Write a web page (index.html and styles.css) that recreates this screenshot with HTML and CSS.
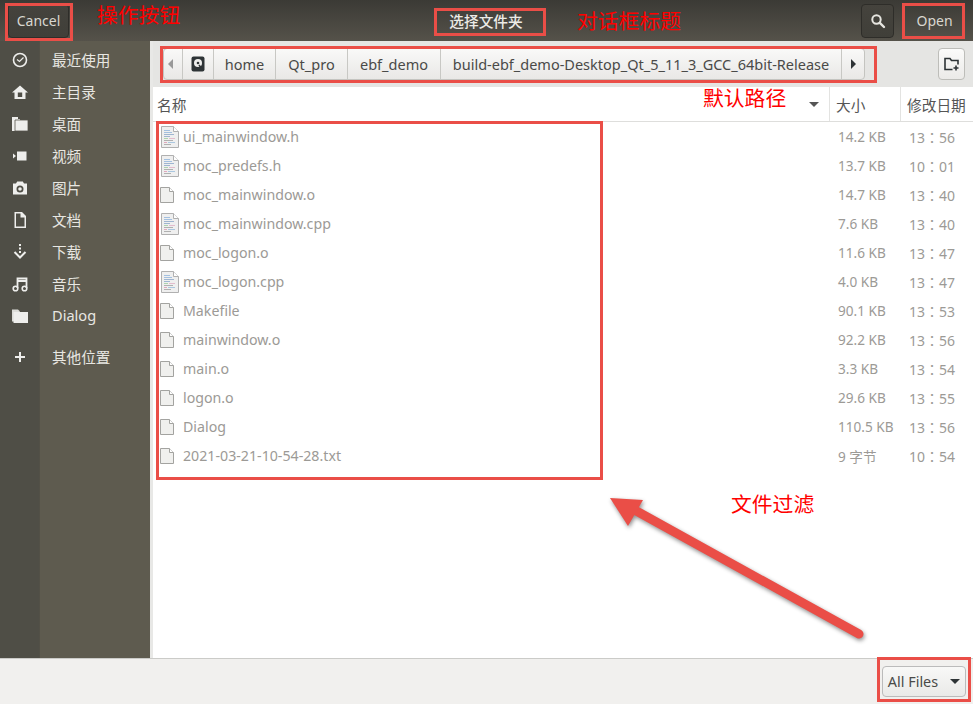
FILE: index.html
```html
<!DOCTYPE html>
<html lang="zh">
<head>
<meta charset="utf-8">
<title>选择文件夹</title>
<link rel="stylesheet" href="styles.css">
</head>
<body>
<svg class="defs" width="0" height="0" aria-hidden="true">
  <symbol id="file-plain" viewBox="0 0 14 16">
    <path d="M.5.5h9l4 4v11h-13z" fill="#f0f0ee" stroke="#a3a3a0"/>
    <path d="M9.500.5v4h4" fill="#fff" stroke="#a3a3a0"/>
  </symbol>
  <symbol id="file-text" viewBox="0 0 18 22">
    <path d="M.5.5h12l5 5v16h-17z" fill="#efefef" stroke="#b0b0b0"/>
    <path d="M12.500.5v5h5" fill="#fff" stroke="#b0b0b0"/>
    <g stroke-width=".8">
      <path d="M3 4.500h6M3 6.500h8" stroke="#8fb4dc"/>
      <path d="M3 8.500h10M3 10.500h6" stroke="#8aa6c8"/>
      <path d="M3 12.500h4" stroke="#9ccc9c"/><path d="M8 12.500h6" stroke="#dfaec4"/>
      <path d="M3 14.500h9" stroke="#a0a0a0"/>
      <path d="M3 16.500h3" stroke="#dc94ae"/><path d="M7 16.500h7" stroke="#98bcdc"/>
      <path d="M3 18.500h7" stroke="#a0a0a0"/>
    </g>
  </symbol>
</svg>

<div class="app">
  <header class="titlebar">
    <button class="hbtn cancel">Cancel</button>
    <div class="title">选择文件夹</div>
    <button class="hbtn search" aria-label="search">
      <svg width="16" height="16" viewBox="0 0 16 16"><circle cx="6.500" cy="6.500" r="4.200" fill="none" stroke="#e6e5e0" stroke-width="2"/><path d="M9.800 9.800l4.200 4.200" stroke="#e6e5e0" stroke-width="2.400" stroke-linecap="round"/></svg>
    </button>
    <button class="hbtn open">Open</button>
  </header>

  <div class="main">
    <nav class="sidebar">
      <div class="side-item">
        <span class="side-icon"><svg width="16" height="16" viewBox="0 0 16 16"><circle cx="8" cy="8" r="6.500" fill="none" stroke="#eeeeec" stroke-width="1.600"/><path d="M5 7.500l2.500 2 4-4" fill="none" stroke="#eeeeec" stroke-width="1.200"/></svg></span>
        <span class="side-label">最近使用</span>
      </div>
      <div class="side-item">
        <span class="side-icon"><svg width="16" height="16" viewBox="0 0 16 16"><path fill-rule="evenodd" d="M8 1.500L0 8.500h2.500V15h11V8.500H16zM5.800 8.500h4.400v4.500H5.800z" fill="#eeeeec"/></svg></span>
        <span class="side-label">主目录</span>
      </div>
      <div class="side-item">
        <span class="side-icon"><svg width="16" height="16" viewBox="0 0 16 16"><path d="M0 1h6v2h2v12H0z" fill="#eeeeec"/><path d="M3 4h13v11H3z" fill="#eeeeec" stroke="#56544b" stroke-width=".8"/></svg></span>
        <span class="side-label">桌面</span>
      </div>
      <div class="side-item">
        <span class="side-icon"><svg width="16" height="16" viewBox="0 0 16 16"><path d="M5 3.500h9.500v9H5z" fill="#eeeeec"/><path d="M1 5.500l3 2.500-3 2.500z" fill="#eeeeec"/></svg></span>
        <span class="side-label">视频</span>
      </div>
      <div class="side-item">
        <span class="side-icon"><svg width="16" height="16" viewBox="0 0 16 16"><path fill-rule="evenodd" d="M1 3.500h3l1.200-2h5.600l1.200 2h3v11H1zM8 5.500a3.500 3.500 0 1 0 0 7 3.500 3.500 0 0 0 0-7zM8 7.200a1.800 1.800 0 1 1 0 3.600 1.800 1.800 0 0 1 0-3.600z" fill="#eeeeec"/></svg></span>
        <span class="side-label">图片</span>
      </div>
      <div class="side-item">
        <span class="side-icon"><svg width="16" height="16" viewBox="0 0 16 16"><path fill-rule="evenodd" d="M2.500 0h7.500l4 4v12H2.500zM4 1.500v13h8.500V5.500H8.500v-4z" fill="#eeeeec"/></svg></span>
        <span class="side-label">文档</span>
      </div>
      <div class="side-item">
        <span class="side-icon"><svg width="16" height="16" viewBox="0 0 16 16"><path d="M8 0v2M8 3.500v2M8 7v2" stroke="#eeeeec" stroke-width="2"/><path d="M2.500 8L8 13.500 13.500 8" fill="none" stroke="#eeeeec" stroke-width="2"/></svg></span>
        <span class="side-label">下载</span>
      </div>
      <div class="side-item">
        <span class="side-icon"><svg width="16" height="16" viewBox="0 0 16 16"><path d="M5.500 12V2.500h9V12M5.500 5h9" fill="none" stroke="#eeeeec" stroke-width="1.800"/><circle cx="3.500" cy="12.500" r="2.300" fill="none" stroke="#eeeeec" stroke-width="1.600"/><circle cx="12.500" cy="12.500" r="2.300" fill="none" stroke="#eeeeec" stroke-width="1.600"/></svg></span>
        <span class="side-label">音乐</span>
      </div>
      <div class="side-item">
        <span class="side-icon"><svg width="16" height="16" viewBox="0 0 16 16"><path d="M0 1.500h6l2 2v10H0z" fill="#dcdcd8"/><path d="M1.500 4h14.500v11H1.500z" fill="#eeeeec"/></svg></span>
        <span class="side-label">Dialog</span>
      </div>
      <div class="side-item other">
        <span class="side-icon"><svg width="12" height="12" viewBox="0 0 12 12"><path d="M6 1v10M1 6h10" stroke="#eeeeec" stroke-width="2"/></svg></span>
        <span class="side-label">其他位置</span>
      </div>
    </nav>

    <section class="content">
      <div class="pathbar">
        <div class="crumbs">
          <button class="crumb nav-prev"><span class="tri-left"></span></button>
          <button class="crumb disk">
            <svg width="14" height="16" viewBox="0 0 14 16"><rect x=".5" y=".5" width="13" height="15" rx="2" fill="#2e3436"/><circle cx="7" cy="7" r="4" fill="#eeeeec"/><circle cx="7" cy="7" r="1.300" fill="#2e3436"/><path d="M8 9l3 4" stroke="#2e3436" stroke-width="1.500"/></svg>
          </button>
          <button class="crumb c-home">home</button>
          <button class="crumb c-qt">Qt_pro</button>
          <button class="crumb c-ebf">ebf_demo</button>
          <button class="crumb c-build">build-ebf_demo-Desktop_Qt_5_11_3_GCC_64bit-Release</button>
          <button class="crumb nav-next"><span class="tri-right"></span></button>
        </div>
        <button class="newfolder" aria-label="new folder">
          <svg width="16" height="16" viewBox="0 0 16 16"><path d="M8.500 13.500H1V2.500h5l1.500 2H14v4" fill="none" stroke="#2e3436" stroke-width="1.600"/><path d="M12 9.500v5M9.500 12h5" stroke="#2e3436" stroke-width="1.600"/></svg>
        </button>
      </div>

      <div class="table-head">
        <div class="col-name">名称<span class="sort"></span></div>
        <div class="col-size">大小</div>
        <div class="col-date">修改日期</div>
      </div>

      <div class="rows">
        <div class="row"><svg class="ico-text"><use href="#file-text"/></svg><span class="name">ui_mainwindow.h</span><span class="size">14.2 KB</span><span class="date">13：56</span></div>
        <div class="row"><svg class="ico-text"><use href="#file-text"/></svg><span class="name">moc_predefs.h</span><span class="size">13.7 KB</span><span class="date">10：01</span></div>
        <div class="row"><svg class="ico-plain"><use href="#file-plain"/></svg><span class="name">moc_mainwindow.o</span><span class="size">14.7 KB</span><span class="date">13：40</span></div>
        <div class="row"><svg class="ico-text"><use href="#file-text"/></svg><span class="name">moc_mainwindow.cpp</span><span class="size">7.6 KB</span><span class="date">13：40</span></div>
        <div class="row"><svg class="ico-plain"><use href="#file-plain"/></svg><span class="name">moc_logon.o</span><span class="size">11.6 KB</span><span class="date">13：47</span></div>
        <div class="row"><svg class="ico-text"><use href="#file-text"/></svg><span class="name">moc_logon.cpp</span><span class="size">4.0 KB</span><span class="date">13：47</span></div>
        <div class="row"><svg class="ico-plain"><use href="#file-plain"/></svg><span class="name">Makefile</span><span class="size">90.1 KB</span><span class="date">13：53</span></div>
        <div class="row"><svg class="ico-plain"><use href="#file-plain"/></svg><span class="name">mainwindow.o</span><span class="size">92.2 KB</span><span class="date">13：56</span></div>
        <div class="row"><svg class="ico-plain"><use href="#file-plain"/></svg><span class="name">main.o</span><span class="size">3.3 KB</span><span class="date">13：54</span></div>
        <div class="row"><svg class="ico-plain"><use href="#file-plain"/></svg><span class="name">logon.o</span><span class="size">29.6 KB</span><span class="date">13：55</span></div>
        <div class="row"><svg class="ico-plain"><use href="#file-plain"/></svg><span class="name">Dialog</span><span class="size">110.5 KB</span><span class="date">13：56</span></div>
        <div class="row"><svg class="ico-plain"><use href="#file-plain"/></svg><span class="name">2021-03-21-10-54-28.txt</span><span class="size">9 字节</span><span class="date">10：54</span></div>
      </div>
    </section>
  </div>

  <footer class="footer">
    <button class="filter">All Files<span class="sort dark"></span></button>
  </footer>
</div>

<!-- screenshot annotations drawn over the dialog -->
<div class="mark m-cancel"></div>
<div class="mark m-title"></div>
<div class="mark m-open"></div>
<div class="mark m-path"></div>
<div class="mark m-list"></div>
<div class="mark m-filter"></div>
<div class="note n-action">操作按钮</div>
<div class="note n-title">对话框标题</div>
<div class="note n-path">默认路径</div>
<div class="note n-filter">文件过滤</div>
<svg class="arrow" width="973" height="704" viewBox="0 0 973 704" aria-hidden="true">
  <g class="arrow-art">
    <path d="M859 634L631 508" stroke="#ea4e47" stroke-width="9" stroke-linecap="round"/>
    <path d="M610 498L643 500 628 526z" fill="#ea4e47"/>
  </g>
</svg>
</body>
</html>
```

FILE: styles.css
```css
* { box-sizing: border-box; }
html, body { margin: 0; padding: 0; }
body {
  width: 973px;
  height: 704px;
  overflow: hidden;
  position: relative;
  font-family: "Noto Sans", "Noto Sans CJK SC", sans-serif;
  font-size: 14px;
  background: #fff;
}
button { font: inherit; padding: 0; }
.defs { position: absolute; }
.app { display: flex; flex-direction: column; height: 704px; }

.titlebar {
  height: 41px;
  flex: none;
  display: flex;
  align-items: center;
  padding: 0 8px;
  background: linear-gradient(#3b3a35, #55524a);
  position: relative;
}
.title {
  flex: 1;
  text-align: center;
  color: #ecebe6;
  font-weight: 500;
  font-size: 14.700px;
  padding-left: 42px;
}
.hbtn {
  height: 34px;
  color: #d9d7d0;
  background: linear-gradient(#45433d, #403f39);
  border: 1px solid #2e2d29;
  border-radius: 4px;
}
.cancel { width: 61px; }
.search { width: 33px; display: flex; align-items: center; justify-content: center; }
.open {
  width: 61px;
  margin-left: 10px;
  background: none;
  border-color: transparent;
}

.main { flex: 1; display: flex; min-height: 0; }
.sidebar {
  width: 150px;
  flex: none;
  padding-top: 2px;
  background: linear-gradient(90deg, #4f4e46 0, #4f4e46 39px, #46453e 39px, #5e5b4f 40px);
  color: #e8e7e2;
}
.side-item { height: 32px; display: flex; align-items: center; }
.side-item.other { margin-top: 9px; }
.side-icon { width: 39px; padding-top: 2px; display: flex; justify-content: center; }
.side-label { margin-left: 13px; font-size: 14.600px; }

.content { flex: 1; display: flex; flex-direction: column; border-left: 3px solid #e8e8e6; min-width: 0; }
.pathbar {
  height: 46px;
  flex: none;
  background: #e5e5e3;
  display: flex;
  align-items: center;
  padding: 0 8px 0 10px;
  justify-content: space-between;
}
.crumbs {
  display: flex;
  height: 32px;
  width: 702px;
  border: 1px solid #c4c4c0;
  border-radius: 4px;
  overflow: hidden;
  background: linear-gradient(#f9f9f8, #e9e8e6);
  font-size: 14.500px;
}
.crumb {
  flex: none;
  height: 100%;
  border: 0;
  border-right: 1px solid #c8c8c4;
  background: none;
  color: #4a4a48;
  display: flex;
  align-items: center;
  justify-content: center;
  white-space: nowrap;
}
.nav-prev { width: 19px; padding-right: 5px; }
.disk { width: 31px; }
.c-home { width: 62px; }
.c-qt { width: 72px; }
.c-ebf { width: 93px; }
.c-build { width: 401px; }
.nav-next { width: 22px; border-right: 0; border-left: 0; }
.tri-left { border: 5px solid transparent; border-left: 0; border-right: 5px solid #999; }
.tri-right { border: 5px solid transparent; border-right: 0; border-left: 5px solid #2e3436; }
.newfolder {
  width: 27px;
  height: 32px;
  border: 1px solid #bdbdb9;
  border-radius: 4px;
  background: linear-gradient(#fbfbfa, #ebeae8);
  display: flex;
  align-items: center;
  justify-content: center;
}

.table-head {
  height: 35px;
  flex: none;
  display: flex;
  background: #fff;
  border-bottom: 1px solid #dededc;
  color: #555;
  font-size: 14.700px;
}
.table-head > div { display: flex; align-items: center; }
.col-name { width: 676px; padding-left: 4px; justify-content: space-between; padding-right: 10px; }
.col-size { width: 71px; padding-left: 6px; border-left: 1px solid #e3e3e1; }
.col-date { flex: 1; padding-left: 6px; border-left: 1px solid #e3e3e1; white-space: nowrap; }
.sort { border: 5px solid transparent; border-bottom: 0; border-top: 5px solid #555; }
.sort.dark { border-top-color: #2e3436; margin-left: 12px; }

.rows { flex: 1; background: #fff; color: #9c9a96; }
.row { height: 29px; display: flex; align-items: center; position: relative; }
.ico-text { width: 18px; height: 22px; margin-left: 8px; flex: none; }
.ico-plain { width: 14px; height: 16px; margin-left: 7px; margin-right: 5px; flex: none; }
.name { margin-left: 4px; width: 655px; flex: none; font-size: 14.200px; }
.size { width: 71px; flex: none; font-size: 13.600px; }
.date { flex: none; font-size: 14px; font-family: "Noto Sans", "Noto Sans CJK TC", sans-serif; }

.footer {
  height: 46px;
  flex: none;
  background: #f1f0ee;
  border-top: 1px solid #cbcbc8;
  display: flex;
  justify-content: flex-end;
  align-items: center;
  padding: 0 7px 0 0;
}
.filter {
  width: 84px;
  height: 31px;
  border: 1px solid #bbb;
  border-radius: 4px;
  background: linear-gradient(#f8f8f7, #eaeae8);
  color: #4a4a48;
  font-size: 14.400px;
  display: flex;
  align-items: center;
  justify-content: center;
}

/* annotations */
.mark { position: absolute; border: 3px solid #ea4e47; }
.m-cancel { left: 5px; top: 3px; width: 68px; height: 38px; }
.m-title { left: 434px; top: 8px; width: 112px; height: 28px; }
.m-open { left: 902px; top: 3px; width: 63px; height: 36px; }
.m-path { left: 160px; top: 46px; width: 717px; height: 37px; }
.m-list { left: 156px; top: 121px; width: 447px; height: 359px; }
.m-filter { left: 877px; top: 657px; width: 94px; height: 45px; }
.note { position: absolute; color: #f00; font-size: 20.800px; line-height: 26px; white-space: nowrap; }
.n-action { left: 97px; top: 2px; }
.n-title { left: 577px; top: 8px; }
.n-path { left: 703px; top: 85px; }
.n-filter { left: 731px; top: 491px; }
.arrow { position: absolute; left: 0; top: 0; pointer-events: none; }
.arrow-art { filter: drop-shadow(1px 2px 2px rgba(0,0,0,.45)); }
```
